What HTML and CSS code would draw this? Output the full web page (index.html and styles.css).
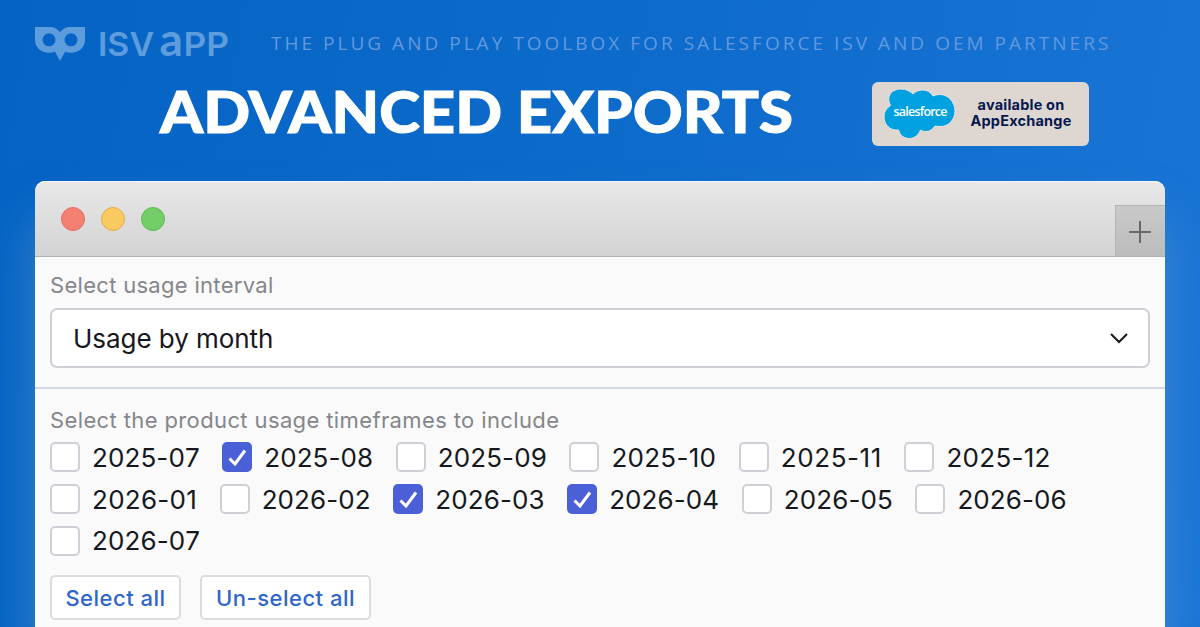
FILE: index.html
```
<!DOCTYPE html>
<html lang="en">
<head>
    <meta charset="UTF-8">
    <meta name="viewport" content="width=device-width, initial-scale=1.0">
    <title>ISV app - Advanced Exports</title>
    <link rel="stylesheet" href="styles.css">
</head>
<body>
    <header class="top-bar">
        <svg class="logo" width="200" height="44" viewBox="0 0 200 44" role="img" aria-label="ISV app">
            <path fill-rule="evenodd" d="M0 2H14.500C19 2 23 4 25 7.500C27 4 31 2 35.500 2H50V15C50 22.500 43.500 27.800 36 27.800C34 27.800 32 27.500 30.200 26.800L25 36L20 26.800C18 27.500 16 27.800 14 27.800C6.500 27.800 0 22.500 0 15ZM14 8.300A6.500 6.500 0 1 0 14 21.300A6.500 6.500 0 1 0 14 8.300ZM36 8.300A6.500 6.500 0 1 0 36 21.300A6.500 6.500 0 1 0 36 8.300Z"/>
            <text class="logo-caps" x="63" y="30.500" textLength="56" lengthAdjust="spacingAndGlyphs">ISV</text>
            <text class="logo-a" x="124.500" y="30.500">a</text>
            <text class="logo-caps" x="148.500" y="30.500" textLength="45.500" lengthAdjust="spacingAndGlyphs">PP</text>
        </svg>
        <div class="tagline">THE PLUG AND PLAY TOOLBOX FOR SALESFORCE ISV AND OEM PARTNERS</div>
    </header>

    <div class="heading">
        <h1>ADVANCED EXPORTS</h1>
        <div class="badge">
            <svg class="cloud" width="73" height="52" viewBox="0 0 73 52">
                <path d="M30 6C33 3 36 2 39.500 2C44 2 47.500 4 50 8C52.500 7 54.500 6.500 57 6.500C65 6.500 72 14 72 23C72 32 65 39 57 38.500C54 38.500 52 38 52 38C50 41.500 46.500 43.500 43 43.500C41 43.500 39 43 37.500 42C35.500 47 31.500 50.500 26.500 50.500C21 50.500 17 47.500 15.500 42C6.500 43 1 36 1 29C1 24 3.500 20 7.500 17.500C2.500 8 9 1 18 1C23 1 27 3 30 6Z"/>
                <text x="10.500" y="27.500" textLength="54">salesforce</text>
            </svg>
            <div class="badge-text">available on<br>AppExchange</div>
        </div>
    </div>

    <main class="window">
        <div class="title-bar">
            <span class="dot red"></span>
            <span class="dot yellow"></span>
            <span class="dot green"></span>
            <div class="new-tab">
                <svg width="22" height="22" viewBox="0 0 22 22"><path d="M11 0V22M0 11H22"/></svg>
            </div>
        </div>

        <section class="interval">
            <div class="label">Select usage interval</div>
            <div class="select">
                <span>Usage by month</span>
                <svg width="18" height="12" viewBox="0 0 18 12"><path d="M1 2L9 10L17 2"/></svg>
            </div>
        </section>

        <section class="timeframes">
            <div class="label">Select the product usage timeframes to include</div>
            <div class="row">
                <div class="option"><span class="box"></span>2025-07</div>
                <div class="option"><span class="box checked"><svg viewBox="0 0 30 30"><path d="M7.500 16.500L13 22L23 8.500"/></svg></span>2025-08</div>
                <div class="option"><span class="box"></span>2025-09</div>
                <div class="option loose"><span class="box"></span>2025-10</div>
                <div class="option looser"><span class="box"></span>2025-11</div>
                <div class="option loose"><span class="box"></span>2025-12</div>
            </div>
            <div class="row">
                <div class="option loose"><span class="box"></span>2026-01</div>
                <div class="option"><span class="box"></span>2026-02</div>
                <div class="option"><span class="box checked"><svg viewBox="0 0 30 30"><path d="M7.500 16.500L13 22L23 8.500"/></svg></span>2026-03</div>
                <div class="option"><span class="box checked"><svg viewBox="0 0 30 30"><path d="M7.500 16.500L13 22L23 8.500"/></svg></span>2026-04</div>
                <div class="option"><span class="box"></span>2026-05</div>
                <div class="option"><span class="box"></span>2026-06</div>
            </div>
            <div class="row">
                <div class="option"><span class="box"></span>2026-07</div>
            </div>
            <div class="actions">
                <button class="button">Select all</button>
                <button class="button wide">Un-select all</button>
            </div>
        </section>
    </main>
</body>
</html>
```
FILE: styles.css
```
* {
    box-sizing: border-box;
}
body {
    width: 1200px;
    height: 627px;
    margin: 0;
    overflow: hidden;
    background: linear-gradient(100deg, #0463c4 0%, #0c6aca 45%, #1a75d6 100%);
    font-family: Inter, "Liberation Sans", sans-serif;
}
.top-bar {
    display: flex;
    height: 82px;
    padding: 25px 0 0 35px;
}
.logo {
    flex: none;
    overflow: visible;
    fill: #5d9cdd;
}
.logo-caps {
    font: 600 33px Inter, sans-serif;
}
.logo-a {
    font: 700 46px Lato, sans-serif;
}
.tagline {
    margin-left: 36px;
    font-family: "Open Sans", sans-serif;
    font-size: 19px;
    font-weight: 500;
    line-height: 36px;
    letter-spacing: 3.020px;
    white-space: nowrap;
    color: #6399de;
}
.heading {
    display: flex;
    height: 99px;
    padding-left: 160px;
}
.heading h1 {
    width: 712px;
    margin: 0;
    font-family: Lato, sans-serif;
    font-size: 58px;
    font-weight: 900;
    line-height: 58px;
    white-space: nowrap;
    color: #fff;
    -webkit-text-stroke: 1px #fff;
    transform: scaleX(1.063);
    transform-origin: left;
}
.badge {
    display: flex;
    width: 217px;
    height: 64px;
    padding: 6px 0 0 11px;
    border-radius: 6px;
    background: #ded6d0;
}
.cloud path {
    fill: #00a1e0;
    stroke: #eee5dd;
    stroke-width: 1;
}
.cloud text {
    font: 600 12.5px "Open Sans", sans-serif;
    fill: #fff;
}
.badge-text {
    width: 130px;
    padding-top: 9px;
    font-size: 14.500px;
    font-weight: 700;
    line-height: 16px;
    letter-spacing: 0.2px;
    text-align: center;
    color: #06184f;
}
.window {
    width: 1130px;
    height: 446px;
    margin: 0 auto;
    border-radius: 10px 10px 0 0;
    background: #fafafa;
    box-shadow: 0 40px 50px rgba(100, 155, 205, 0.55);
}
.title-bar {
    display: flex;
    align-items: center;
    gap: 16px;
    height: 76px;
    padding-left: 26px;
    border-top: 1px solid #f6f6f6;
    border-bottom: 1px solid #b2b2b2;
    border-radius: 10px 10px 0 0;
    background: linear-gradient(#e8e8e8, #d3d3d3);
}
.dot {
    width: 24px;
    height: 24px;
    border: 1px solid #e46c60;
    border-radius: 50%;
    background: #f38072;
}
.dot.yellow {
    border-color: #dfae50;
    background: #f9ca60;
}
.dot.green {
    border-color: #62b758;
    background: #74ce68;
}
.new-tab {
    display: flex;
    align-items: center;
    justify-content: center;
    align-self: flex-end;
    width: 50px;
    height: 51px;
    padding: 1px 1px 0 0;
    margin-left: auto;
    border: solid #b5b5b5;
    border-width: 1px 0 0 1px;
    background: linear-gradient(#c9c9c9, #bcbcbc);
}
.new-tab path {
    stroke: #66686a;
    stroke-width: 2;
}
.label {
    font-size: 22px;
    line-height: 28px;
    letter-spacing: 0.3px;
    color: #85868b;
}
.interval {
    height: 132px;
    padding: 14px 15px 0;
    border-bottom: 2px solid #d2d7e3;
}
.select {
    display: flex;
    align-items: center;
    justify-content: space-between;
    height: 60px;
    margin-top: 9px;
    padding: 0 20px 0 21px;
    border: 2px solid #d0cfd7;
    border-radius: 7px;
    background: #fff;
    font-size: 26px;
    letter-spacing: -0.05px;
    color: #16181d;
}
.select path {
    fill: none;
    stroke: #16181d;
    stroke-width: 2;
}
.timeframes {
    padding: 17px 15px 0;
}
.timeframes .label {
    letter-spacing: 0.38px;
}
.row {
    display: flex;
    gap: 22.500px;
    height: 41.700px;
    padding-top: 8.400px;
}
.option {
    display: flex;
    align-items: center;
    height: 30px;
    font-size: 26px;
    font-kerning: none;
    letter-spacing: 0.1px;
    color: #16181d;
}
/* months with a narrow "1" */
.option.loose {
    letter-spacing: 0.280px;
}
.option.looser {
    letter-spacing: 0.6px;
}
.box {
    width: 30px;
    height: 30px;
    margin-right: 12px;
    border: 2px solid #d0cfd7;
    border-radius: 5px;
    background: #fff;
}
.box.checked {
    border: 0;
    background: #4b60d6;
}
.box svg {
    display: block;
}
.box path {
    fill: none;
    stroke: #fff;
    stroke-width: 3;
}
.actions {
    display: flex;
    gap: 19px;
    margin-top: 16px;
}
.button {
    width: 131px;
    height: 45px;
    padding: 0;
    border: 2px solid #dcdce0;
    border-radius: 5px;
    background: #fff;
    font: 500 22px Inter, sans-serif;
    letter-spacing: 0.5px;
    color: #2e66c9;
}
.button.wide {
    width: 171px;
}
```
